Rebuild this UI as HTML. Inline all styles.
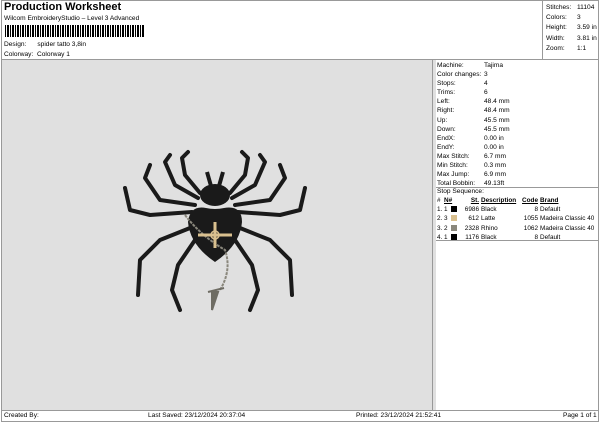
<!DOCTYPE html>
<html><head><style>
*{margin:0;padding:0;box-sizing:border-box}
body{width:600px;height:424px;background:#fff;font-family:"Liberation Sans",sans-serif;font-size:7px;color:#000;position:relative;overflow:hidden}
.a{position:absolute;white-space:nowrap}
.sq{display:inline-block;width:6px;height:6px;vertical-align:-1px}
.rr{text-align:right}
</style></head><body>
<div class="a" style="left:1px;top:0;width:598px;height:422px;border:1px solid #999"></div>
<div class="a" style="left:4px;top:1px;font-size:11px;font-weight:bold">Production Worksheet</div>
<div class="a" style="left:4px;top:15px;font-size:6.6px">Wilcom EmbroideryStudio – Level 3 Advanced</div>
<div class="a" style="left:5px;top:25px;width:140px;height:12px;background:repeating-linear-gradient(90deg,#000 0 1px,#fff 1px 2px,#000 2px 4px,#fff 4px 5px)"></div>
<div class="a" style="left:4px;top:41px;font-size:6.6px">Design:&nbsp;&nbsp;&nbsp;&nbsp;&nbsp;&nbsp;spider tatto 3,8in</div>
<div class="a" style="left:4px;top:51px;font-size:6.6px">Colorway:&nbsp;&nbsp;Colorway 1</div>
<div class="a" style="left:542px;top:1px;width:57px;height:58px;border-left:1px solid #999"></div>
<div class="a" style="left:546px;top:3px;line-height:10.2px;font-size:6.6px">Stitches:<br>Colors:<br>Height:<br>Width:<br>Zoom:</div>
<div class="a" style="left:577px;top:3px;line-height:10.2px;font-size:6.6px">11104<br>3<br>3.59 in<br>3.81 in<br>1:1</div>
<div class="a" style="left:2px;top:59px;width:596px;border-top:1px solid #999"></div>
<div class="a" style="left:2px;top:60px;width:431px;height:350px;background:#e0e0e0;border-right:1px solid #999"></div>
<div class="a" style="left:433px;top:60px;width:3px;height:350px;background:#e0e0e0"></div>
<div class="a" style="left:437px;top:61px;line-height:9.1px;font-size:6.6px">Machine:<br>Color changes:<br>Stops:<br>Trims:<br>Left:<br>Right:<br>Up:<br>Down:<br>EndX:<br>EndY:<br>Max Stitch:<br>Min Stitch:<br>Max Jump:<br>Total Bobbin:</div>
<div class="a" style="left:484px;top:61px;line-height:9.1px;font-size:6.6px">Tajima<br>3<br>4<br>6<br>48.4 mm<br>48.4 mm<br>45.5 mm<br>45.5 mm<br>0.00 in<br>0.00 in<br>6.7 mm<br>0.3 mm<br>6.9 mm<br>49.13ft</div>
<div class="a" style="left:436px;top:187px;width:162px;border-top:1px solid #999"></div>
<div class="a" style="left:437px;top:188px;font-size:6.6px">Stop Sequence:</div>
<div class="a" style="left:437px;top:196px;font-size:6.4px;line-height:9.2px">#<br>1.<br>2.<br>3.<br>4.</div>
<div class="a" style="left:444px;top:196px;font-size:6.4px;line-height:9.2px"><b><u>N#</u></b><br>1&nbsp;&nbsp;<span class="sq" style="background:#000"></span><br>3&nbsp;&nbsp;<span class="sq" style="background:#d9c08f"></span><br>2&nbsp;&nbsp;<span class="sq" style="background:#8a877c"></span><br>1&nbsp;&nbsp;<span class="sq" style="background:#000"></span></div>
<div class="a rr" style="left:458px;width:21px;top:196px;font-size:6.4px;line-height:9.2px"><b><u>St.</u></b><br>6986<br>612<br>2328<br>1176</div>
<div class="a" style="left:481px;top:196px;font-size:6.4px;line-height:9.2px"><b><u>Description</u></b><br>Black<br>Latte<br>Rhino<br>Black</div>
<div class="a rr" style="left:518px;width:20px;top:196px;font-size:6.4px;line-height:9.2px"><b><u>Code</u></b><br>8<br>1055<br>1062<br>8</div>
<div class="a" style="left:540px;top:196px;font-size:6.4px;line-height:9.2px"><b><u>Brand</u></b><br>Default<br>Madeira Classic 40<br>Madeira Classic 40<br>Default</div>
<div class="a" style="left:436px;top:240px;width:162px;border-top:1px solid #999"></div>
<div class="a" style="left:2px;top:410px;width:596px;border-top:1px solid #999"></div>
<div class="a" style="left:4px;top:412px;font-size:6.6px">Created By:</div>
<div class="a" style="left:148px;top:412px;font-size:6.6px">Last Saved: 23/12/2024 20:37:04</div>
<div class="a" style="left:356px;top:412px;font-size:6.6px">Printed: 23/12/2024 21:52:41</div>
<div class="a" style="left:563px;top:412px;font-size:6.6px">Page 1 of 1</div>
<svg class="a" style="left:0;top:0" width="600" height="424">
<g fill="none" stroke="#1a1a1a" stroke-width="4" stroke-linejoin="round" stroke-linecap="round">
<path d="M200 193 L185 175 L182 158 L188 152"/>
<path d="M230 193 L245 175 L248 158 L242 152"/>
<path d="M198 198 L175 185 L165 162 L170 155"/>
<path d="M232 198 L255 185 L265 162 L260 155"/>
<path d="M195 205 L160 200 L145 178 L150 165"/>
<path d="M235 205 L270 200 L285 178 L280 165"/>
<path d="M192 212 L150 215 L130 210 L125 188"/>
<path d="M238 212 L280 215 L300 210 L305 188"/>
<path d="M190 228 L160 240 L140 260 L138 295"/>
<path d="M240 228 L270 240 L290 260 L292 295"/>
<path d="M195 240 L178 265 L172 290 L180 310"/>
<path d="M235 240 L252 265 L258 290 L250 310"/>
</g>
<path d="M211 186 L207 172 M219 186 L223 172" stroke="#1a1a1a" stroke-width="4"/>
<ellipse cx="215" cy="195" rx="15" ry="11" fill="#1a1a1a"/>
<path d="M188 222 Q190 205 206 208 Q215 210 224 208 Q242 205 242 222 Q240 245 215 262 Q190 245 188 222Z" fill="#1a1a1a"/>
<path d="M185 215 Q200 235 225 250 Q232 270 220 290" fill="none" stroke="#8a877c" stroke-width="2" stroke-dasharray="3 1"/>
<path d="M198 235 L232 235 M215 222 L215 248" stroke="#d9c08f" stroke-width="3"/>
<circle cx="215" cy="235" r="4" fill="none" stroke="#d9c08f" stroke-width="1.5"/>
<path d="M218 292 L212 310 L212 292Z M208 292 L224 288" fill="#6e6c63" stroke="#6e6c63" stroke-width="2"/>
</svg>
</body></html>
